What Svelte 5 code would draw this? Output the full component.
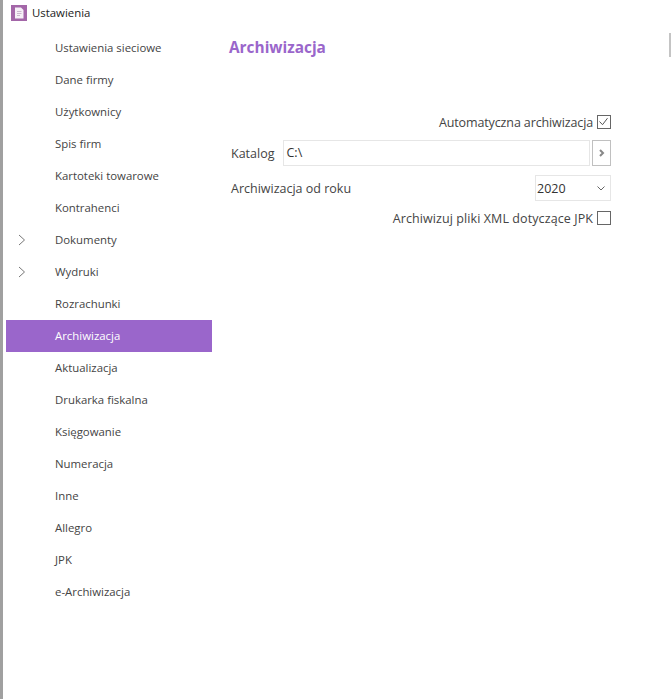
<script>
  const items = [
    { name: 'Ustawienia sieciowe' },
    { name: 'Dane firmy' },
    { name: 'Użytkownicy' },
    { name: 'Spis firm' },
    { name: 'Kartoteki towarowe' },
    { name: 'Kontrahenci' },
    { name: 'Dokumenty', expandable: true },
    { name: 'Wydruki', expandable: true },
    { name: 'Rozrachunki' },
    { name: 'Archiwizacja', active: true },
    { name: 'Aktualizacja' },
    { name: 'Drukarka fiskalna' },
    { name: 'Księgowanie' },
    { name: 'Numeracja' },
    { name: 'Inne' },
    { name: 'Allegro' },
    { name: 'JPK' },
    { name: 'e-Archiwizacja' }
  ];
</script>

<div class="window">
  <header class="titlebar">
    <svg class="app-icon" width="16" height="16" viewBox="0 0 16 16">
      <rect width="16" height="16" fill="#a366a8" />
      <path d="M4 2.5h6l2.5 2.5v8.5H4z" fill="#f6f0f7" />
      <path d="M6 6.5h4.5M6 8.5h4.5M6 10.5h3" stroke="#cbb8cd" stroke-width="1" />
    </svg>
    <span>Ustawienia</span>
  </header>

  <div class="body">
    <nav class="sidebar">
      {#each items as item}
        <div class="item" class:active={item.active}>
          {#if item.expandable}
            <svg class="chevron" width="8" height="12" viewBox="0 0 8 12">
              <path d="M1 1l5.5 5L1 11" fill="none" stroke="#777" stroke-width="1" />
            </svg>
          {/if}
          <span>{item.name}</span>
        </div>
      {/each}
    </nav>

    <main class="content">
      <h1>Archiwizacja</h1>

      <div class="form">
        <div class="row right auto">
          <span>Automatyczna archiwizacja</span>
          <span class="check">
            <svg width="13" height="13" viewBox="0 0 13 13">
              <path d="M2.5 6.5l3 3.2 5-6.5" fill="none" stroke="#555" stroke-width="1" />
            </svg>
          </span>
        </div>

        <div class="row catalog">
          <span>Katalog</span>
          <div class="input">C:\</div>
          <button class="browse" aria-label="Wybierz katalog">
            <svg width="6" height="8" viewBox="0 0 6 8">
              <path d="M1 1l3 3-3 3" fill="none" stroke="#888" stroke-width="2" />
            </svg>
          </button>
        </div>

        <div class="row between year">
          <span>Archiwizacja od roku</span>
          <div class="select">
            <span>2020</span>
            <svg width="8" height="5" viewBox="0 0 8 5">
              <path d="M0.5 0.5l3.5 3.5 3.5-3.5" fill="none" stroke="#666" stroke-width="1" />
            </svg>
          </div>
        </div>

        <div class="row right xml">
          <span>Archiwizuj pliki XML dotyczące JPK</span>
          <span class="check"></span>
        </div>
      </div>
    </main>

    <div class="edge"></div>
  </div>
</div>

<style>
  :global(body) {
    margin: 0;
    background: #fff;
  }

  .window {
    width: 671px;
    height: 699px;
    box-sizing: border-box;
    border-left: 3px solid #a0a0a0;
    display: flex;
    flex-direction: column;
    overflow: hidden;
    font-family: "Open Sans", "Noto Sans", sans-serif;
    font-size: 11.4px;
    color: #444;
    background: #fff;
  }

  .titlebar {
    height: 32px;
    flex: none;
    display: flex;
    align-items: center;
    gap: 5px;
    padding: 0 0 7px 8px;
    box-sizing: border-box;
    color: #222;
  }

  .app-icon {
    flex: none;
  }

  .body {
    flex: 1;
    display: flex;
  }

  .sidebar {
    width: 206px;
    margin-left: 3px;
    flex: none;
  }

  .item {
    position: relative;
    height: 32px;
    box-sizing: border-box;
    display: flex;
    align-items: center;
    padding: 0 0 2px 49px;
  }

  .item.active {
    background: #9a66cb;
    color: #fff;
  }

  .chevron {
    position: absolute;
    left: 12px;
    top: 10px;
  }

  .content {
    width: 382px;
    margin-left: 17px;
    flex: none;
    font-size: 12.5px;
  }

  h1 {
    margin: 0;
    padding-top: 6px;
    height: 33px;
    box-sizing: border-box;
    font-size: 15.4px;
    font-weight: 700;
    color: #9a66cb;
    line-height: 20px;
  }

  .form {
    padding-top: 49px;
    padding-left: 2px;
  }

  .row {
    display: flex;
    align-items: center;
  }

  .right {
    justify-content: flex-end;
    gap: 4px;
  }

  .between {
    justify-content: space-between;
  }

  .auto {
    height: 16px;
    letter-spacing: -0.12px;
  }

  .catalog {
    margin-top: 10px;
    height: 26px;
  }

  .year {
    margin-top: 9px;
    height: 26px;
  }

  .xml {
    margin-top: 9px;
    height: 16px;
    letter-spacing: 0.09px;
  }

  .check {
    width: 12px;
    height: 12px;
    border: 1px solid #666;
    display: flex;
    flex: none;
  }

  .check svg {
    margin: -1px;
    flex: none;
  }

  .input {
    flex: 1;
    height: 26px;
    margin-left: 9px;
    box-sizing: border-box;
    border: 1px solid #e6e6e6;
    padding-left: 2px;
    line-height: 24px;
    color: #333;
  }

  .browse {
    width: 19px;
    height: 26px;
    margin-left: 2px;
    padding: 0;
    flex: none;
    box-sizing: border-box;
    border: 1px solid #c0c0c0;
    background: #fff;
    display: flex;
    align-items: center;
    justify-content: center;
  }

  .select {
    width: 76px;
    height: 26px;
    box-sizing: border-box;
    border: 1px solid #e6e6e6;
    display: flex;
    align-items: center;
    justify-content: space-between;
    padding: 0 5px 0 1px;
    color: #333;
  }

  .edge {
    width: 2px;
    height: 24px;
    margin-top: 1px;
    margin-left: auto;
    flex: none;
    background: #c4c4c4;
  }
</style>
